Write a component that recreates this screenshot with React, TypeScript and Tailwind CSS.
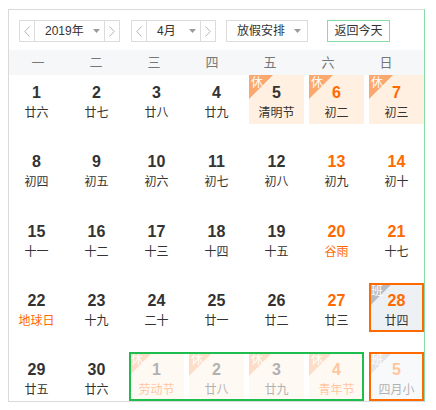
import React from "react";

const FONT = '"Liberation Sans", "Noto Sans CJK SC", sans-serif';

type Cell = {
  d: number;
  l: string;
  wk?: boolean; // orange number
  lo?: boolean; // orange lunar
  badge?: "休" | "班";
  other?: boolean;
  today?: boolean;
  ob?: boolean; // orange border
};

const rows: Cell[][] = [
  [
    { d: 1, l: "廿六" },
    { d: 2, l: "廿七" },
    { d: 3, l: "廿八" },
    { d: 4, l: "廿九" },
    { d: 5, l: "清明节", badge: "休" },
    { d: 6, l: "初二", wk: true, badge: "休" },
    { d: 7, l: "初三", wk: true, badge: "休" },
  ],
  [
    { d: 8, l: "初四" },
    { d: 9, l: "初五" },
    { d: 10, l: "初六" },
    { d: 11, l: "初七" },
    { d: 12, l: "初八" },
    { d: 13, l: "初九", wk: true },
    { d: 14, l: "初十", wk: true },
  ],
  [
    { d: 15, l: "十一" },
    { d: 16, l: "十二" },
    { d: 17, l: "十三" },
    { d: 18, l: "十四" },
    { d: 19, l: "十五" },
    { d: 20, l: "谷雨", wk: true, lo: true },
    { d: 21, l: "十七", wk: true },
  ],
  [
    { d: 22, l: "地球日", lo: true },
    { d: 23, l: "十九" },
    { d: 24, l: "二十" },
    { d: 25, l: "廿一" },
    { d: 26, l: "廿二" },
    { d: 27, l: "廿三", wk: true },
    { d: 28, l: "廿四", wk: true, badge: "班", ob: true },
  ],
  [
    { d: 29, l: "廿五" },
    { d: 30, l: "廿六" },
    { d: 1, l: "劳动节", lo: true, badge: "休", other: true },
    { d: 2, l: "廿八", badge: "休", other: true },
    { d: 3, l: "廿九", badge: "休", other: true },
    { d: 4, l: "青年节", wk: true, lo: true, badge: "休", other: true },
    { d: 5, l: "四月小", wk: true, badge: "班", other: true, ob: true },
  ],
];

function ChevL() {
  return (
    <svg width="6" height="11" viewBox="0 0 6 11">
      <polyline points="5.5,0.5 0.8,5.5 5.5,10.5" fill="none" stroke="#b5b5b5" strokeWidth="1" />
    </svg>
  );
}
function ChevR() {
  return (
    <svg width="6" height="11" viewBox="0 0 6 11">
      <polyline points="0.5,0.5 5.2,5.5 0.5,10.5" fill="none" stroke="#b5b5b5" strokeWidth="1" />
    </svg>
  );
}
function Caret() {
  return (
    <svg width="7" height="4" viewBox="0 0 7 4">
      <polygon points="0,0 7,0 3.5,4" fill="#9a9a9a" />
    </svg>
  );
}

function Stepper({ label, mid }: { label: string; mid: string }) {
  return (
    <div className="flex h-[22px] border border-[#dcdcdc] bg-white">
      <div className="w-[15px] flex items-center justify-center border-r border-[#dcdcdc]">
        <ChevL />
      </div>
      <div className={`${mid} flex items-center justify-between pl-[10px] pr-[4px] text-[12px] text-[#333]`}>
        <span>{label}</span>
        <Caret />
      </div>
      <div className="w-[15px] flex items-center justify-center border-l border-[#dcdcdc]">
        <ChevR />
      </div>
    </div>
  );
}

function DayCell({ c }: { c: Cell }) {
  const bg =
    c.badge === "休" ? "bg-[#fff0e1]" : c.badge === "班" ? "bg-[#eef1f4]" : "bg-white";
  return (
    <div className="relative h-[49px]">
      <div className={`absolute inset-0 ${bg} ${c.other ? "opacity-[0.38]" : ""}`}>
        {c.badge && (
          <>
            <div
              className={`absolute top-0 left-0 w-[24px] h-[24px] [clip-path:polygon(0_0,100%_0,0_100%)] ${
                c.badge === "休" ? "bg-[#fba86e]" : "bg-[#b6bcc4]"
              }`}
            />
            <span className="absolute top-[1px] left-[2px] text-[12px] leading-[14px] text-white">
              {c.badge}
            </span>
          </>
        )}
        <div className="relative flex flex-col items-center pt-[9px]">
          <span
            className={`text-[16px] leading-[18px] font-bold ${
              c.wk ? "text-[#ff6a00]" : "text-[#333]"
            }`}
          >
            {c.d}
          </span>
          <span
            className={`mt-[3px] text-[12px] leading-[16px] ${
              c.lo ? "text-[#ff6a00]" : "text-[#333]"
            }`}
          >
            {c.l}
          </span>
        </div>
      </div>
      {c.ob && <div className="absolute inset-0 border-2 border-[#ff6a00]" />}
    </div>
  );
}

export default function App() {
  const weeks = ["一", "二", "三", "四", "五", "六", "日"];
  return (
    <div className="w-[436px] h-[410px] bg-white pt-[9px] pl-[8px]" style={{ fontFamily: FONT }}>
      <div className="w-[417px] h-[393px] border-t border-l border-b border-[#d9d9d9] border-r border-r-[#86dca6] flex flex-col">
        {/* toolbar */}
        <div className="h-[40px] flex items-start pt-[10px] pl-[10px]">
          <Stepper label="2019年" mid="w-[69px]" />
          <div className="w-[11px]" />
          <Stepper label="4月" mid="w-[53px]" />
          <div className="ml-[10px] w-[82px] h-[22px] border border-[#dcdcdc] flex items-center justify-between pl-[10px] pr-[6px] text-[12px] text-[#333]">
            <span>放假安排</span>
            <Caret />
          </div>
          <div className="ml-[19px] w-[63px] h-[22px] border border-[#86dca6] flex items-center justify-center text-[12px] text-[#333]">
            返回今天
          </div>
        </div>
        {/* week header */}
        <div className="h-[25px] bg-[#f5f7f9]">
          <div className="w-[406px] h-full grid grid-cols-7">
            {weeks.map((w) => (
              <div key={w} className="flex items-center justify-center text-[13px] text-[#777]">
                {w}
              </div>
            ))}
          </div>
        </div>
        {/* grid */}
        <div className="relative grid grid-cols-7 gap-x-[5px] gap-y-[20.25px]">
          {rows.flat().map((c, i) => (
            <DayCell key={i} c={c} />
          ))}
          <div className="absolute left-[120px] top-[277px] w-[235px] h-[49px] border-2 border-[#1ebe4e]" />
        </div>
      </div>
    </div>
  );
}
